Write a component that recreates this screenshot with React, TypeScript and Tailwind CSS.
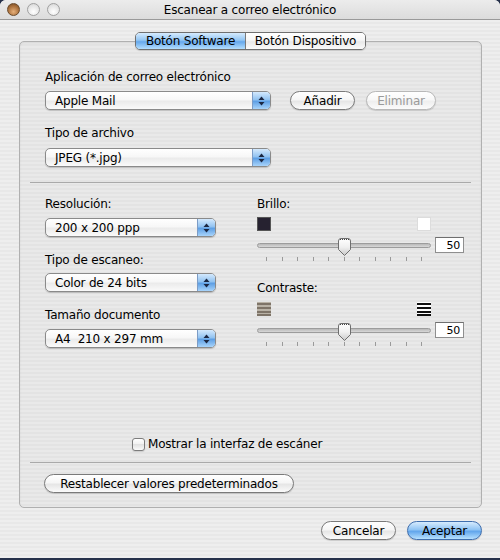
import React from "react";

const stripes =
  "bg-[repeating-linear-gradient(180deg,#eeeeee_0px,#eeeeee_2px,#e8e8e8_2px,#e8e8e8_4px)]";

function Arrows() {
  return (
    <svg width="7" height="10" viewBox="0 0 7 10">
      <path d="M3.5 0.5 L6.5 4 L0.5 4 Z" fill="#1b2742" />
      <path d="M0.5 6 L6.5 6 L3.5 9.5 Z" fill="#1b2742" />
    </svg>
  );
}

function Popup({ label, className }: { label: string; className: string }) {
  return (
    <div
      className={`flex h-[19px] items-stretch rounded-[5px] border border-[#8a8a8a] bg-[linear-gradient(#ffffff,#f7f7f7_45%,#ebebeb_55%,#fafafa)] shadow-[0_1px_1px_rgba(0,0,0,0.18)] ${className}`}
    >
      <div className="flex flex-1 items-center pl-[9px] text-[12px] leading-none text-black">
        {label}
      </div>
      <div className="flex w-[18px] items-center justify-center rounded-r-[4px] border-l border-[#7c9cc6] bg-[linear-gradient(#d4e9fd,#92c3f1_45%,#5e9fe4_55%,#a8d4fb)]">
        <Arrows />
      </div>
    </div>
  );
}

function Button({
  label,
  className,
  disabled,
  blue,
}: {
  label: string;
  className: string;
  disabled?: boolean;
  blue?: boolean;
}) {
  const base = blue
    ? "border-[#3f6eae] bg-[linear-gradient(#d6ebfe,#90c4f4_45%,#62a6ec_55%,#b6e0ff)] text-black"
    : disabled
      ? "border-[#b8b8b8] bg-[linear-gradient(#ffffff,#f8f8f8_45%,#efefef_55%,#fbfbfb)] text-[#9a9a9a]"
      : "border-[#7a7a7a] bg-[linear-gradient(#ffffff,#f6f6f6_45%,#e6e6e6_55%,#fbfbfb)] text-black";
  return (
    <div
      className={`flex h-[19px] items-center justify-center rounded-full border text-[12px] leading-none shadow-[0_1px_1px_rgba(0,0,0,0.15)] ${base} ${className}`}
    >
      {label}
    </div>
  );
}

function Thumb() {
  return (
    <svg width="15" height="19" viewBox="0 0 15 19">
      <defs>
        <linearGradient id="tg" x1="0" y1="0" x2="0" y2="1">
          <stop offset="0" stopColor="#ffffff" />
          <stop offset="0.5" stopColor="#f0f0f0" />
          <stop offset="1" stopColor="#c9c9c9" />
        </linearGradient>
      </defs>
      <path
        d="M1.5 3 Q1.5 0.5 4 0.5 L11 0.5 Q13.5 0.5 13.5 3 L13.5 11.5 L7.5 17.5 L1.5 11.5 Z"
        fill="url(#tg)"
        stroke="#6e6e6e"
        strokeWidth="1"
      />
      <path d="M3 1.5 L12 1.5" stroke="#444" strokeWidth="1" strokeDasharray="1 1" />
    </svg>
  );
}

function SliderRow() {
  const ticks = Array.from({ length: 11 }, (_, i) => i);
  return (
    <div className="flex flex-col">
      <div className="flex h-[16px] items-center">
        <div className="relative h-[16px] w-[174px]">
          <div className="absolute left-0 right-0 top-[6px] h-[5px] rounded-full border border-[#9c9c9c] bg-[linear-gradient(#b8b8b8,#d8d8d8)]" />
          <div className="absolute left-[80px] top-[1px]">
            <Thumb />
          </div>
        </div>
        <div className="ml-[4px] flex h-[16px] w-[29px] items-center justify-end border border-[#8f8f8f] border-t-[#6f6f6f] bg-white pr-[3px] text-[11px] leading-none text-black">
          50
        </div>
      </div>
      <div className="relative mt-[4px] h-[4px] w-[174px]">
        {ticks.map((i) => (
          <div
            key={i}
            className="absolute top-0 h-[4px] w-px bg-[#9a9a9a]"
            style={{ left: 9 + i * 15.5 }}
          />
        ))}
      </div>
    </div>
  );
}

function Label({ text, className = "" }: { text: string; className?: string }) {
  return (
    <div className={`h-[16px] text-[12px] leading-[16px] text-black ${className}`}>{text}</div>
  );
}

export default function App() {
  return (
    <div className="h-[560px] w-[500px] bg-[#25304a] font-['DejaVu_Sans',sans-serif] tracking-[-0.2px]">
      <div className={`flex h-[558px] w-[500px] flex-col rounded-t-[6px] ${stripes}`}>
        {/* Title bar */}
        <div className="relative flex h-[20px] items-center justify-center rounded-t-[6px] border-b border-[#9a9a9a] bg-[linear-gradient(#ececec,#dcdcdc)]">
          <div className="absolute left-[7px] top-[3px] flex gap-[7px]">
            <div className="h-[13px] w-[13px] rounded-full border border-[#6b4a2a] bg-[radial-gradient(circle_at_50%_70%,#e6b07a,#a86e3a_60%,#6e4520)]" />
            <div className="h-[13px] w-[13px] rounded-full border border-[#a0a0a0] bg-[radial-gradient(circle_at_50%_70%,#ffffff,#e6e6e6_60%,#cfcfcf)]" />
            <div className="h-[13px] w-[13px] rounded-full border border-[#a0a0a0] bg-[radial-gradient(circle_at_50%_70%,#ffffff,#e6e6e6_60%,#cfcfcf)]" />
          </div>
          <div className="text-[12px] leading-none text-black">Escanear a correo electrónico</div>
        </div>

        {/* Tabs */}
        <div className="relative z-10 mt-[12px] flex justify-center pl-[1px]">
          <div className="flex h-[18px] rounded-[5px] border border-[#6f6f6f] shadow-[0_1px_1px_rgba(0,0,0,0.15)]">
            <div className="flex w-[109px] items-center justify-center rounded-l-[4px] bg-[linear-gradient(#d6ebfe,#92c5f3_45%,#66a8ec_55%,#b4defe)] text-[12px] leading-none text-black">
              Botón Software
            </div>
            <div className="flex w-[120px] items-center justify-center rounded-r-[4px] border-l border-[#7a7a7a] bg-[linear-gradient(#ffffff,#f6f6f6_45%,#e9e9e9_55%,#fbfbfb)] text-[12px] leading-none text-black">
              Botón Dispositivo
            </div>
          </div>
        </div>

        {/* Box */}
        <div className="ml-[19px] -mt-[9px] flex h-[467px] w-[463px] flex-col rounded-[5px] border border-[#b0b0b0] bg-[repeating-linear-gradient(180deg,#e9e9e9_0px,#e9e9e9_2px,#e3e3e3_2px,#e3e3e3_4px)] shadow-[inset_0_1px_2px_rgba(0,0,0,0.08)]">
          <div className="flex flex-col pl-[25px] pt-[27px]">
            <Label text="Aplicación de correo electrónico" />
            <div className="mt-[6px] flex items-center">
              <Popup label="Apple Mail" className="w-[226px]" />
              <Button label="Añadir" className="ml-[19px] w-[65px]" />
              <Button label="Eliminar" className="ml-[11px] w-[70px]" disabled />
            </div>
            <Label text="Tipo de archivo" className="mt-[15px]" />
            <Popup label="JPEG (*.jpg)" className="mt-[7px] w-[226px]" />
          </div>

          <div className="mx-[10px] mt-[15px] h-px bg-[#a9a9a9]" />

          <div className="mt-[13px] flex pl-[25px]">
            <div className="flex w-[212px] flex-col">
              <Label text="Resolución:" />
              <Popup label="200 x 200 ppp" className="mt-[6px] w-[171px]" />
              <Label text="Tipo de escaneo:" className="mt-[15px]" />
              <Popup label="Color de 24 bits" className="mt-[5px] w-[171px]" />
              <Label text="Tamaño documento" className="mt-[15px]" />
              <Popup label="A4  210 x 297 mm" className="mt-[6px] w-[171px] whitespace-pre" />
            </div>
            <div className="flex flex-col">
              <Label text="Brillo:" />
              <div className="mt-[5px] flex w-[174px] justify-between">
                <div className="h-[14px] w-[14px] border border-[#555] bg-[#262230]" />
                <div className="h-[14px] w-[14px] border border-[#dcdcdc] bg-white" />
              </div>
              <div className="mt-[6px]">
                <SliderRow />
              </div>
              <Label text="Contraste:" className="mt-[19px]" />
              <div className="mt-[6px] flex w-[174px] justify-between">
                <svg width="14" height="14" viewBox="0 0 14 14">
                  <rect x="0" y="0" width="14" height="14" fill="#b9b2a6" />
                  <rect x="0" y="1" width="14" height="2" fill="#7e7468" />
                  <rect x="0" y="5" width="14" height="2" fill="#7e7468" />
                  <rect x="0" y="9" width="14" height="2" fill="#7e7468" />
                  <rect x="0" y="12" width="14" height="2" fill="#7e7468" />
                </svg>
                <svg width="14" height="14" viewBox="0 0 14 14">
                  <rect x="0" y="0" width="14" height="14" fill="#ffffff" />
                  <rect x="0" y="1" width="14" height="2" fill="#111" />
                  <rect x="0" y="5" width="14" height="2" fill="#111" />
                  <rect x="0" y="9" width="14" height="2" fill="#111" />
                  <rect x="0" y="12" width="14" height="2" fill="#111" />
                </svg>
              </div>
              <div className="mt-[6px]">
                <SliderRow />
              </div>
            </div>
          </div>

          <div className="ml-[112px] mt-[88px] flex items-center gap-[3px]">
            <div className="h-[13px] w-[13px] rounded-[3px] border border-[#7c7c7c] bg-[linear-gradient(#ffffff,#f0f0f0_50%,#e2e2e2_50%,#fafafa)] shadow-[0_1px_1px_rgba(0,0,0,0.12)]" />
            <div className="text-[12px] leading-[16px] text-black">Mostrar la interfaz de escáner</div>
          </div>

          <div className="mx-[10px] mt-[10px] h-px bg-[#a9a9a9]" />

          <div className="ml-[24px] mt-[11px] flex">
            <Button label="Restablecer valores predeterminados" className="w-[250px]" />
          </div>
        </div>

        {/* Bottom buttons */}
        <div className="mt-[13px] flex justify-end gap-[11px] pr-[18px]">
          <Button label="Cancelar" className="w-[75px]" />
          <Button label="Aceptar" className="w-[75px]" blue />
        </div>
      </div>
    </div>
  );
}
